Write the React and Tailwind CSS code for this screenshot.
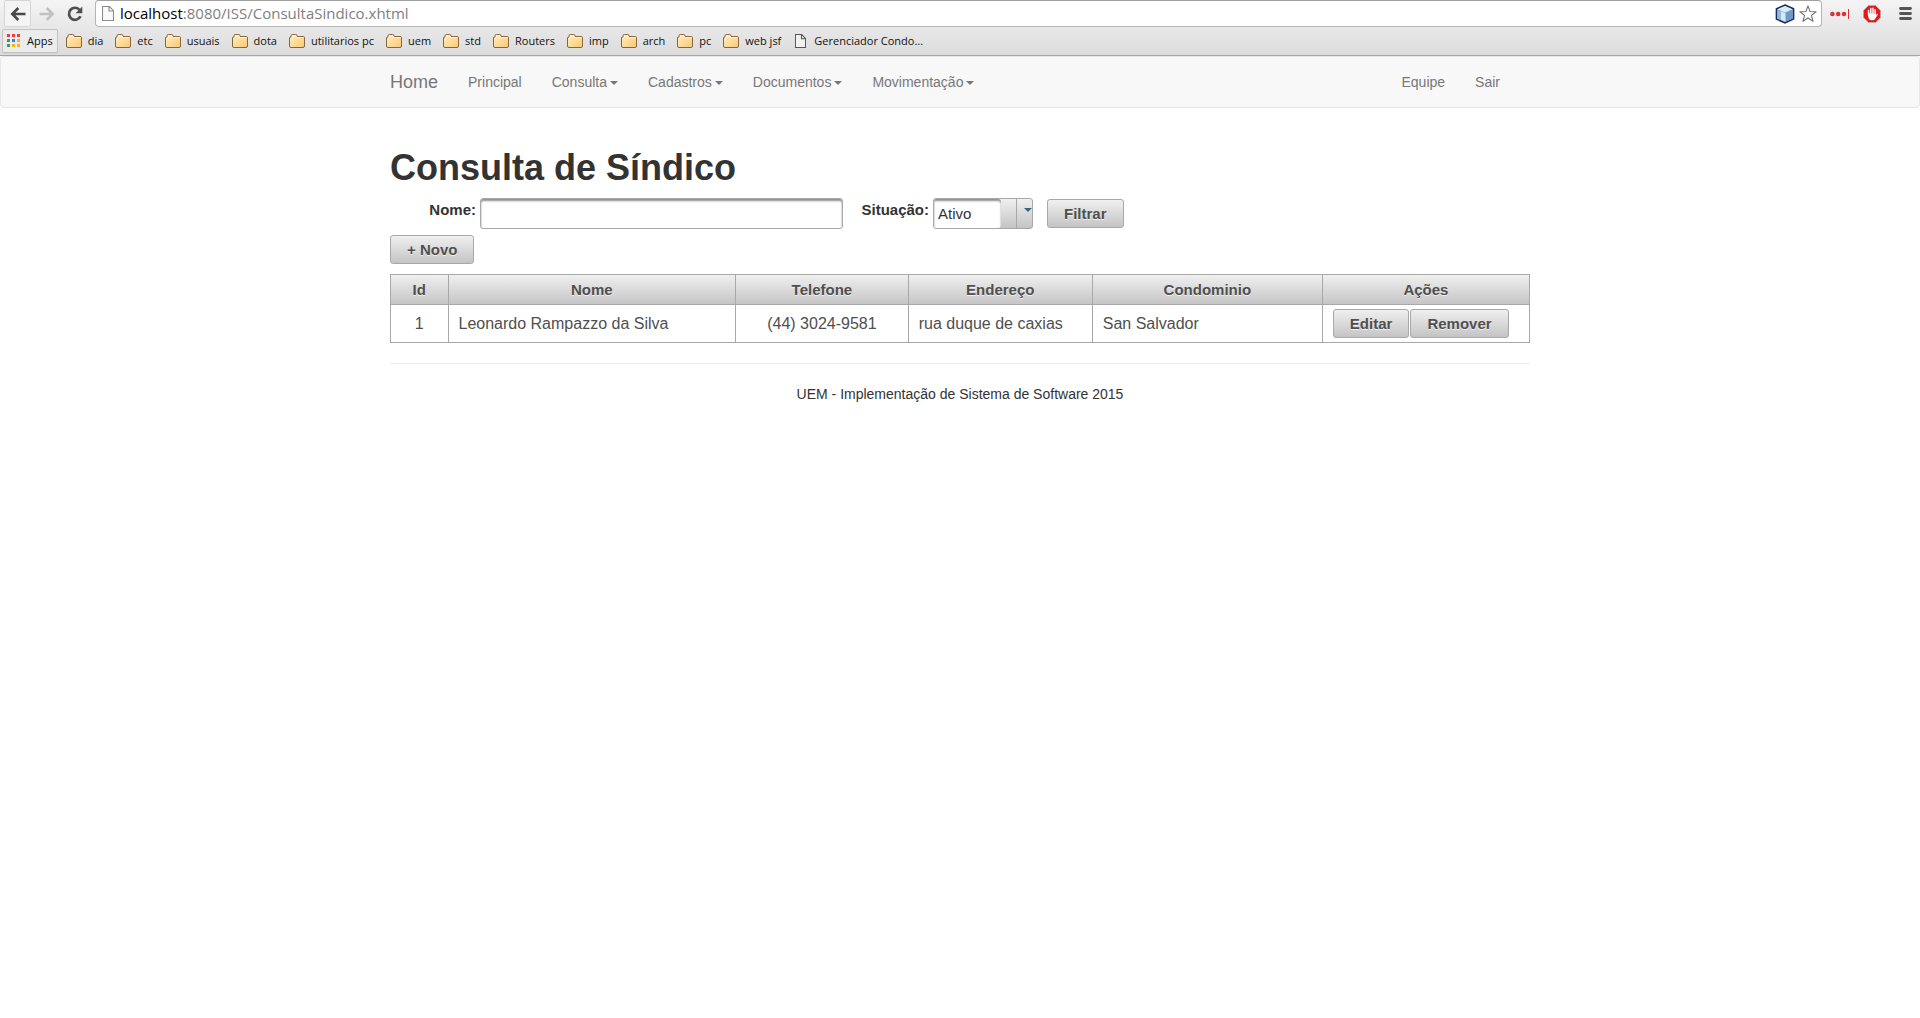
import { useState } from "react";

const bookmarks = ["dia", "etc", "usuais", "dota", "utilitarios pc", "uem", "std", "Routers", "imp", "arch", "pc", "web jsf"];

const menu = [
  { label: "Principal" },
  { label: "Consulta", caret: true },
  { label: "Cadastros", caret: true },
  { label: "Documentos", caret: true },
  { label: "Movimentação", caret: true },
];

const columns = [
  { label: "Id", width: "w-[5%]" },
  { label: "Nome", width: "w-[25%]" },
  { label: "Telefone", width: "w-[15%]" },
  { label: "Endereço", width: "w-[16%]" },
  { label: "Condominio", width: "w-[20%]" },
  { label: "Ações", width: "w-[18%]" },
];

const rows = [
  { id: 1, nome: "Leonardo Rampazzo da Silva", telefone: "(44) 3024-9581", endereco: "rua duque de caxias", condominio: "San Salvador" },
];

function FolderIcon() {
  return (
    <svg width="16" height="14" viewBox="0 0 16 14" aria-hidden="true">
      <defs>
        <linearGradient id="folder" x1="0" y1="0" x2="1" y2="1">
          <stop offset="0" stopColor="#fff0c4" />
          <stop offset="1" stopColor="#fbc873" />
        </linearGradient>
      </defs>
      <path d="M.5 12V3.5L2 3V1.8Q2 .5 3.3.5h3.4Q8 .5 8 1.8v.7h6.2q1.3 0 1.3 1.3V12q0 1.5-1.5 1.5H2Q.5 13.5.5 12Z" fill="url(#folder)" stroke="#8a6440" />
      <path d="M3 2h4v1.5h7.5" fill="none" stroke="#fff6dc" />
    </svg>
  );
}

function PageIcon({ className, stroke, fill }) {
  return (
    <svg className={className} viewBox="0 0 12 15" fill={fill} stroke={stroke} aria-hidden="true">
      <path d="M.5.5h6.8l4.2 4.2v9.8H.5ZM7 .5V5h4.5" strokeWidth="1.1" />
    </svg>
  );
}

function AppsIcon() {
  const colors = ["#f03c38", "#f03c38", "#f03c38", "#2fa159", "#2c85e8", "#f8b40c", "#2fa159", "#f8b40c", "#f8b40c"];
  return (
    <svg width="13" height="13" viewBox="0 0 13 13" aria-hidden="true">
      {colors.map((c, i) => (
        <rect key={i} x={(i % 3) * 5} y={Math.floor(i / 3) * 5} width="3" height="3" fill={c} />
      ))}
    </svg>
  );
}

function ArrowIcon({ flip, color }) {
  return (
    <svg width="16" height="14" viewBox="0 0 16 14" className={flip ? "-scale-x-100" : ""} fill="none" stroke={color} aria-hidden="true">
      <path d="M15.5 7H2.5M8.3 1 2.3 7l6 6" strokeWidth="2.6" />
    </svg>
  );
}

function ReloadIcon() {
  return (
    <svg width="16" height="16" viewBox="0 0 16 16" aria-hidden="true">
      <path d="M12.7 4A6 6 0 1 0 13.5 10.2" fill="none" stroke="#505050" strokeWidth="2.7" />
      <path d="M15.3.6v6.7H8.6Z" fill="#505050" />
    </svg>
  );
}

function CubeIcon() {
  return (
    <svg width="20" height="20" viewBox="0 0 20 20" aria-hidden="true">
      <path d="M10 1 18.6 4.8v10.3L10 19 1.4 15.1V4.8Z" fill="#7ba6d2" stroke="#1d2d5c" strokeWidth="1.5" />
      <path d="M10 2 17.4 5.2 10 8.6 2.6 5.2Z" fill="#d9ecf6" />
      <path d="M2.4 5.8 9.6 9v8.8l-7.2-3.2Z" fill="#8fb8dc" />
      <path d="M10.4 9l7.2-3.2v8.8l-7.2 3.2Z" fill="#7199c8" />
      <path d="M10.5 9.2 6 7.2v8.4l4.5 2Z" fill="#d5ebf3" />
    </svg>
  );
}

function StarIcon() {
  return (
    <svg width="18" height="18" viewBox="0 0 18 18" aria-hidden="true">
      <path d="M9 .9 11.1 6.5l6 .2-4.7 3.7 1.7 5.9L9 13l-5.1 3.3 1.7-5.9L.9 6.7l6-.2Z" fill="#fff" stroke="#707070" strokeWidth="1.1" strokeLinejoin="round" />
    </svg>
  );
}

function DotsIcon() {
  return (
    <svg width="19" height="10" viewBox="0 0 19 10" fill="#d93434" aria-hidden="true">
      <circle cx="2.4" cy="5" r="2.3" />
      <circle cx="8.2" cy="5" r="2.3" />
      <circle cx="14" cy="5" r="2.3" />
      <rect x="18" y="0" width="1" height="10" />
    </svg>
  );
}

function BlockIcon() {
  return (
    <svg width="18" height="18" viewBox="0 0 18 18" aria-hidden="true">
      <path d="M5.5.5h7l5 5v7l-5 5h-7l-5-5v-7Z" fill="#e8191c" stroke="#b9a5a5" />
      <path d="M5.6 10V5.5M7.8 9V3.6M10 9V3.2M12.1 10V4.8" stroke="#fff" strokeWidth="1.5" strokeLinecap="round" />
      <path d="M4.9 8.5h8v1.7l1.2-1.5q1.1-.2.7.9l-2.4 4q-.8 1.6-2.6 1.6H8.4q-1.8 0-2.6-1.6-.9-1.8-.9-5.1Z" fill="#fff" />
    </svg>
  );
}

function MenuIcon() {
  return (
    <svg width="13" height="13" viewBox="0 0 13 13" aria-hidden="true">
      <path d="M1.5 1.5h10M1.5 6.5h10M1.5 11.5h10" stroke="#555" strokeWidth="2.8" strokeLinecap="round" />
    </svg>
  );
}

function Caret() {
  return <span className="mt-0.5 ml-[3px] border-x-4 border-t-4 border-x-transparent border-t-[#777]" />;
}

function Browser() {
  return (
    <header className="border-b border-[#a5a5a5] bg-linear-to-b from-[#f4f4f4] to-[#dcdcdc] font-['Open_Sans','Noto_Sans',sans-serif]">
      <div className="flex h-7 items-start">
        <button aria-label="Voltar" className="ml-1 flex h-[27px] w-[27px] items-center justify-center rounded-xs border border-[#d6d6d6] bg-[#f4f4f4]">
          <ArrowIcon color="#484848" />
        </button>
        <button aria-label="Avançar" className="ml-1 flex h-[27px] w-6 items-center justify-center">
          <ArrowIcon flip color="#c2c2c2" />
        </button>
        <button aria-label="Recarregar" className="ml-1 flex h-[27px] w-6 items-center justify-center">
          <ReloadIcon />
        </button>
        <div className="ml-2 flex h-[27px] grow items-center rounded-sm border border-[#b4b4b4] border-t-[#a0a0a0] bg-white pr-1 pl-1.5">
          <PageIcon className="h-[15px] w-3" fill="#fafafa" stroke="#8c8c8c" />
          <div className="ml-1.5 grow pb-0.5 text-[15px] text-[#808080]">
            <span className="text-black">localhost</span>:8080/ISS/ConsultaSindico.xhtml
          </div>
          <button aria-label="NetBeans"><CubeIcon /></button>
          <button aria-label="Favoritar" className="ml-1"><StarIcon /></button>
        </div>
        <div className="flex h-[27px] items-center pr-2">
          <button aria-label="Senhas" className="ml-2"><DotsIcon /></button>
          <button aria-label="Bloqueador" className="ml-3.5"><BlockIcon /></button>
          <button aria-label="Menu" className="ml-[18px]"><MenuIcon /></button>
        </div>
      </div>
      <nav aria-label="Favoritos" className="flex h-[27px] items-center pb-0.5 text-[11px] text-[#111]">
        <a href="#apps" className="ml-0.5 flex h-6 items-center gap-[7px] rounded-xs border border-[#c4c4c4] bg-[#ececec] px-1 shadow-2xs"><AppsIcon />Apps</a>
        <div className="ml-2 flex items-center gap-3">
          {bookmarks.map((b) => (
            <a key={b} href={"#" + b} className="flex items-center gap-1.5 whitespace-nowrap"><FolderIcon />{b}</a>
          ))}
          <a href="#gerenciador" className="ml-0.5 flex items-center gap-2 whitespace-nowrap">
            <PageIcon className="h-3.5 w-[11px]" fill="#f2f2f2" stroke="#555" />Gerenciador Condo...
          </a>
        </div>
      </nav>
    </header>
  );
}

function Button({ children, className = "" }) {
  return (
    <button className={"h-[29px] rounded-[3px] border border-[#a8a8a8] bg-linear-to-b from-[#f0f0f0] to-[#c4c4c4] px-4 text-[15px] leading-5 font-bold text-[#4f4f4f] text-shadow-[0_1px_0_rgba(255,255,255,0.7)] " + className}>
      {children}
    </button>
  );
}

export default function App() {
  const [nome, setNome] = useState("");
  const [situacao, setSituacao] = useState("Ativo");
  return (
    <div className="min-h-screen bg-white font-['Liberation_Sans',Arial,sans-serif] text-sm leading-5 text-[#333]">
      <Browser />
      <nav className="rounded-sm border border-[#e7e7e7] bg-[#f8f8f8] text-[#777]">
        <div className="mx-auto flex h-[50px] max-w-[1140px] items-center">
          <a href="#home" className="pr-[15px] text-lg leading-5">Home</a>
          {menu.map((m) => (
            <a key={m.label} href={"#" + m.label} className="flex items-center px-[15px]">
              {m.label}{m.caret && <Caret />}
            </a>
          ))}
          <a href="#equipe" className="ml-auto px-[15px]">Equipe</a>
          <a href="#sair" className="mr-[15px] px-[15px]">Sair</a>
        </div>
      </nav>
      <main className="mx-auto max-w-[1140px] pt-10">
        <h1 className="mb-2.5 text-4xl leading-10 font-bold">Consulta de Síndico</h1>
        <form className="flex items-start text-[15px]" onSubmit={(e) => e.preventDefault()}>
          <label htmlFor="nome" className="w-[90px] pt-0.5 pr-1 text-right font-bold">Nome:</label>
          <input id="nome" value={nome} onChange={(e) => setNome(e.target.value)} className="h-[31px] w-[363px] rounded-[3px] border border-[#a8a8a8] px-1 inset-shadow-[0_2px_2px_#8f8f8f]" />
          <label htmlFor="situacao" className="w-[90px] pt-0.5 pr-1 text-right font-bold">Situação:</label>
          <div className="flex h-[31px] w-[100px] overflow-hidden rounded-[3px] border border-[#a8a8a8] bg-linear-to-b from-[#f0f0f0] to-[#c4c4c4]">
            <select id="situacao" value={situacao} onChange={(e) => setSituacao(e.target.value)} className="grow appearance-none rounded-r-[3px] bg-white pl-1 inset-shadow-[0_2px_2px_#8f8f8f]">
              <option>Ativo</option>
              <option>Inativo</option>
            </select>
            <span className="w-[15px]" />
            <span className="flex w-4 justify-end border-l border-[#a8a8a8] pt-[9px]">
              <span className="h-0 border-x-4 border-t-4 border-x-transparent border-t-[#38667f]" />
            </span>
          </div>
          <Button className="mt-px ml-3.5">Filtrar</Button>
        </form>
        <Button className="mt-1.5 block">+ Novo</Button>
        <table className="mt-2.5 w-full table-fixed border-collapse text-[#4f4f4f]">
          <thead className="text-[15px]">
            <tr className="h-[30px] bg-linear-to-b from-[#f0f0f0] to-[#c4c4c4] text-shadow-[0_1px_0_rgba(255,255,255,0.7)]">
              {columns.map((c) => (
                <th key={c.label} className={"border border-[#a8a8a8] font-bold " + c.width}>{c.label}</th>
              ))}
            </tr>
          </thead>
          <tbody className="text-base leading-5">
            {rows.map((r) => (
              <tr key={r.id}>
                <td className="border border-[#a8a8a8] text-center">{r.id}</td>
                <td className="border border-[#a8a8a8] px-2.5">{r.nome}</td>
                <td className="border border-[#a8a8a8] text-center">{r.telefone}</td>
                <td className="border border-[#a8a8a8] px-2.5">{r.endereco}</td>
                <td className="border border-[#a8a8a8] px-2.5">{r.condominio}</td>
                <td className="border border-[#a8a8a8] px-2.5 py-1">
                  <div className="flex gap-px">
                    <Button>Editar</Button>
                    <Button>Remover</Button>
                  </div>
                </td>
              </tr>
            ))}
          </tbody>
        </table>
        <hr className="my-5 border-[#eee]" />
        <footer className="text-center">UEM - Implementação de Sistema de Software 2015</footer>
      </main>
    </div>
  );
}
